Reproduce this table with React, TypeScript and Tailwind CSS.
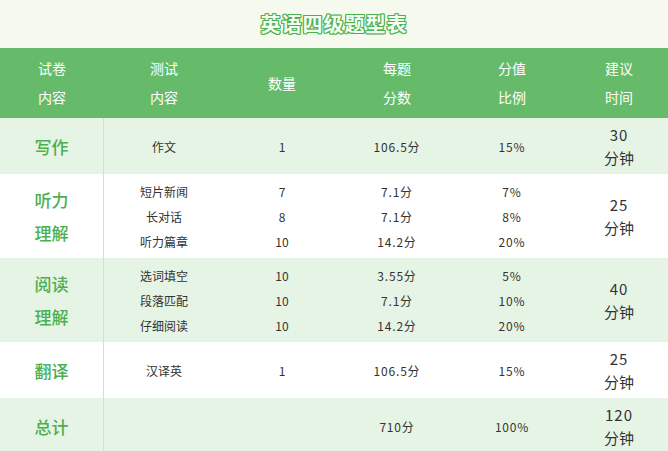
import React from "react";

const cols = "grid grid-cols-[104px_120px_116px_114px_116px_98px]";
const font = { fontFamily: '"Noto Sans CJK SC", "Noto Sans", sans-serif' };

function Lines({ items, cls = "" }: { items: string[]; cls?: string }) {
  return (
    <div className={`flex flex-col items-center justify-center text-[12px] leading-[25px] text-[#333] ${cls}`}>
      {items.map((t, i) => (
        <div key={i}>{t}</div>
      ))}
    </div>
  );
}

function Label({ lines }: { lines: string[] }) {
  return (
    <div className="flex flex-col items-center justify-center border-r border-[#c8e6c9] text-[17px] font-medium leading-[33px] text-[#4caf50]">
      {lines.map((t, i) => (
        <div key={i}>{t}</div>
      ))}
    </div>
  );
}

function Time({ n }: { n: string }) {
  return (
    <div className="flex flex-col items-center justify-center text-[15px] leading-[23px] text-[#333]">
      <div className="tracking-[1px]">{n}</div>
      <div>分钟</div>
    </div>
  );
}

type Row = {
  label: string[];
  items: string[];
  nums: string[];
  scores: string[];
  ratios: string[];
  time: string;
  h: string;
  bg: string;
};

const rows: Row[] = [
  { label: ["写作"], items: ["作文"], nums: ["1"], scores: ["106.5分"], ratios: ["15%"], time: "30", h: "h-[56px]", bg: "bg-[#e6f4e5]" },
  { label: ["听力", "理解"], items: ["短片新闻", "长对话", "听力篇章"], nums: ["7", "8", "10"], scores: ["7.1分", "7.1分", "14.2分"], ratios: ["7%", "8%", "20%"], time: "25", h: "h-[84px]", bg: "bg-white" },
  { label: ["阅读", "理解"], items: ["选词填空", "段落匹配", "仔细阅读"], nums: ["10", "10", "10"], scores: ["3.55分", "7.1分", "14.2分"], ratios: ["5%", "10%", "20%"], time: "40", h: "h-[84px]", bg: "bg-[#e6f4e5]" },
  { label: ["翻译"], items: ["汉译英"], nums: ["1"], scores: ["106.5分"], ratios: ["15%"], time: "25", h: "h-[56px]", bg: "bg-white" },
  { label: ["总计"], items: [""], nums: [""], scores: ["710分"], ratios: ["100%"], time: "120", h: "h-[56px]", bg: "bg-[#e6f4e5]" },
];

export default function App() {
  return (
    <div className="w-[668px] bg-white" style={font}>
      <div className="flex h-[48px] items-center justify-center bg-[#f6f9ed]">
        <div className="text-[20px] font-bold tracking-[1px] text-[#f4fff2] [text-shadow:1px_0_0_#4caf50,-1px_0_0_#4caf50,0_1px_0_#4caf50,0_-1px_0_#4caf50,1px_1px_0_#4caf50,-1px_-1px_0_#4caf50,1px_-1px_0_#4caf50,-1px_1px_0_#4caf50]">
          英语四级题型表
        </div>
      </div>
      <div className={`${cols} h-[70px] bg-[#66bb6a] text-[14px] leading-[29px] text-white`}>
        {[
          ["试卷", "内容"],
          ["测试", "内容"],
          ["数量"],
          ["每题", "分数"],
          ["分值", "比例"],
          ["建议", "时间"],
        ].map((c, i) => (
          <div key={i} className="flex flex-col items-center justify-center">
            {c.map((t, j) => (
              <div key={j}>{t}</div>
            ))}
          </div>
        ))}
      </div>
      {rows.map((r, i) => (
        <div key={i} className={`${cols} ${r.h} ${r.bg}`}>
          <Label lines={r.label} />
          <Lines items={r.items} />
          <Lines items={r.nums} />
          <Lines items={r.scores} cls="tracking-[0.8px]" />
          <Lines items={r.ratios} cls="tracking-[0.8px]" />
          <Time n={r.time} />
        </div>
      ))}
    </div>
  );
}
